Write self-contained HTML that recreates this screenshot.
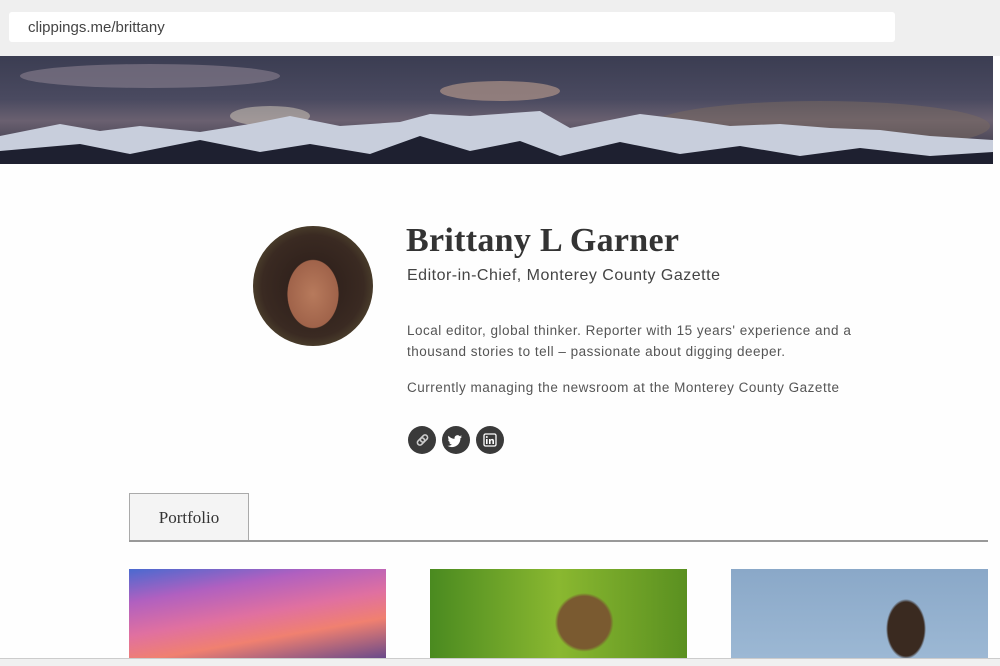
<!DOCTYPE html>
<html><head><style>
*{margin:0;padding:0;box-sizing:border-box}
body{width:1000px;height:666px;overflow:hidden;background:#fefefe;font-family:"Liberation Sans",sans-serif;position:relative}
.top{position:absolute;left:0;top:0;width:1000px;height:56px;background:#efefef}
.addr{position:absolute;left:9px;top:12px;width:886px;height:30px;background:#fff;border-radius:3px;font-size:15px;color:#444;padding:7px 0 0 19px}
.banner{position:absolute;left:0;top:56px;width:993px;height:108px;overflow:hidden;background:linear-gradient(180deg,#3b3d52 0%,#4a4a60 40%,#6a6070 60%,#2a2c3c 100%)}
.av{position:absolute;left:253px;top:226px;width:120px;height:120px;border-radius:50%;overflow:hidden;background:radial-gradient(ellipse 36px 48px at 60px 68px,#b77a5c 0%,#a0634a 70%,transparent 72%),radial-gradient(circle at 60px 60px,#2a1c18 0%,#3a2a22 60%,#6e6a40 100%)}
.t{position:absolute;left:407px;color:#444;letter-spacing:0.5px}
h1{position:absolute;left:406px;top:222px;font-family:"Liberation Serif",serif;font-size:34px;font-weight:bold;color:#333;letter-spacing:0.3px}
.ic{position:absolute;top:426px;width:28px;height:28px;border-radius:50%;background:#3a3a3a}
.tab{position:absolute;left:129px;top:493px;width:120px;height:49px;background:#f4f4f4;border:1px solid #aaa;border-bottom:none;font-family:"Liberation Serif",serif;font-size:17px;color:#333;text-align:center;padding-top:14px}
.line{position:absolute;left:129px;top:540px;width:859px;height:2px;background:#999}
.img{position:absolute;top:569px;width:257px;height:89px}
</style></head><body>
<div class="top"><div class="addr">clippings.me/brittany</div></div>
<div class="banner">
<svg width="993" height="108" viewBox="0 0 993 108">
<ellipse cx="150" cy="20" rx="130" ry="12" fill="#8a8090" opacity=".6"/>
<ellipse cx="500" cy="35" rx="60" ry="10" fill="#c0a090" opacity=".6"/>
<ellipse cx="270" cy="60" rx="40" ry="10" fill="#d8d0c0" opacity=".5"/>
<ellipse cx="820" cy="70" rx="170" ry="25" fill="#7a6a60" opacity=".5"/>
<polygon points="0,80 60,68 100,75 140,70 200,76 250,68 290,60 340,70 400,66 430,58 470,60 540,55 570,72 600,66 640,58 690,64 730,70 780,68 830,72 880,74 930,80 993,84 993,108 0,108" fill="#c8cedc"/>
<polygon points="0,95 80,88 130,98 200,84 260,96 310,88 370,98 420,80 470,95 520,85 560,100 620,86 680,98 740,90 800,100 860,92 930,100 993,96 993,108 0,108" fill="#1e2030"/>
</svg></div>
<div class="av"></div>
<h1>Brittany L Garner</h1>
<div class="t" style="top:267px;font-size:16px;color:#444">Editor-in-Chief, Monterey County Gazette</div>
<div class="t" style="top:320px;font-size:13.5px;line-height:21px;color:#555">Local editor, global thinker. Reporter with 15 years' experience and a<br>thousand stories to tell – passionate about digging deeper.</div>
<div class="t" style="top:380px;font-size:13.5px;color:#555">Currently managing the newsroom at the Monterey County Gazette</div>
<div class="ic" style="left:408px"><svg width="28" height="28"><g stroke="#ccc" stroke-width="1.6" fill="none"><rect x="9" y="13" width="8" height="5" rx="2.5" transform="rotate(-45 13 15.5)"/><rect x="12" y="10" width="8" height="5" rx="2.5" transform="rotate(-45 16 12.5)"/></g></svg></div>
<div class="ic" style="left:442px"><svg width="28" height="28"><path d="M20 10.5c-.6.3-1.1.4-1.7.5.6-.4 1.1-.9 1.3-1.6-.6.3-1.2.6-1.9.7a3 3 0 0 0-5.1 2.7c-2.5-.1-4.7-1.3-6.1-3.100-.8 1.4-.3 3.1.9 4-.5 0-.9-.1-1.3-.4 0 1.5 1 2.7 2.4 3-.4.1-.9.2-1.4.1.4 1.2 1.5 2.1 2.8 2.1-1.3 1-2.9 1.400-4.5 1.3 1.3.8 2.9 1.3 4.6 1.3 5.5 0 8.6-4.6 8.4-8.8.6-.4 1.1-1 1.5-1.6z" fill="#fff"/></svg></div>
<div class="ic" style="left:476px"><svg width="28" height="28"><rect x="8" y="8" width="12" height="12" rx="1.5" fill="none" stroke="#fff" stroke-width="1.3"/><rect x="10" y="13" width="1.6" height="5" fill="#fff"/><circle cx="10.8" cy="11" r="1" fill="#fff"/><path d="M13 13h1.5v1c.4-.7 1-1.1 1.8-1.1 1.2 0 1.7.8 1.7 2.1V18h-1.6v-2.7c0-.7-.2-1.1-.8-1.1s-1 .5-1 1.2V18H13z" fill="#fff"/></svg></div>
<div class="tab">Portfolio</div>
<div class="line"></div>
<div class="img" style="left:129px;background:linear-gradient(170deg,#4a6ad0 0%,#b060c0 25%,#e070a0 50%,#f08070 70%,#6a4a8a 100%)"></div>
<div class="img" style="left:430px;background:radial-gradient(circle at 60% 60%,#7a5a30 0 16%,transparent 18%),linear-gradient(90deg,#4a8a20,#8ab830 50%,#5a9020)"></div>
<div class="img" style="left:731px;background:radial-gradient(ellipse 20px 30px at 175px 60px,#3a2a20 0 90%,transparent 100%),linear-gradient(180deg,#8aa8c8,#9cb8d4)"></div>
<div style="position:absolute;left:0;top:658px;width:1000px;height:8px;background:#f0f0f0;border-top:1px solid #ccc"></div>
</body></html>
